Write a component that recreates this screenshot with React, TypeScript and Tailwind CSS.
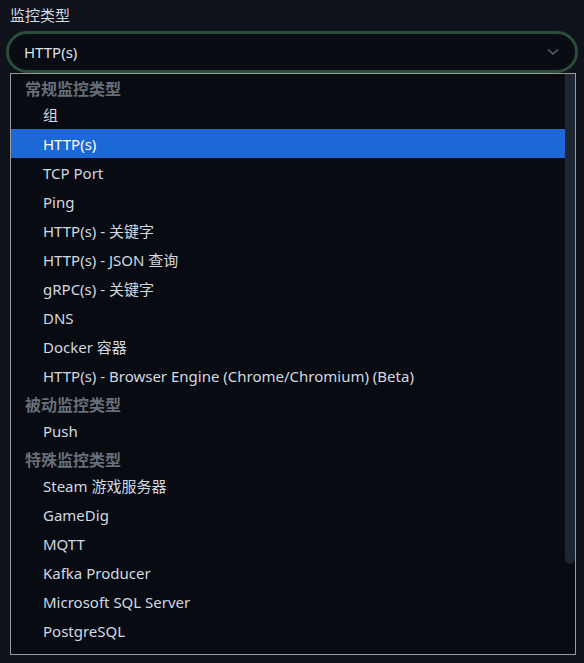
import React from "react";

type Row = { kind: "h" | "i"; text: string; active?: boolean };

const rows: Row[] = [
  { kind: "h", text: "常规监控类型" },
  { kind: "i", text: "组" },
  { kind: "i", text: "HTTP(s)", active: true },
  { kind: "i", text: "TCP Port" },
  { kind: "i", text: "Ping" },
  { kind: "i", text: "HTTP(s) - 关键字" },
  { kind: "i", text: "HTTP(s) - JSON 查询" },
  { kind: "i", text: "gRPC(s) - 关键字" },
  { kind: "i", text: "DNS" },
  { kind: "i", text: "Docker 容器" },
  { kind: "i", text: "HTTP(s) - Browser Engine (Chrome/Chromium) (Beta)" },
  { kind: "h", text: "被动监控类型" },
  { kind: "i", text: "Push" },
  { kind: "h", text: "特殊监控类型" },
  { kind: "i", text: "Steam 游戏服务器" },
  { kind: "i", text: "GameDig" },
  { kind: "i", text: "MQTT" },
  { kind: "i", text: "Kafka Producer" },
  { kind: "i", text: "Microsoft SQL Server" },
  { kind: "i", text: "PostgreSQL" },
];

export default function App() {
  return (
    <div
      className="w-[584px] h-[663px] bg-[#0f121a] overflow-hidden relative"
      style={{ fontFamily: '"Noto Sans", "Noto Sans CJK SC", sans-serif' }}
    >
      <div className="pt-[4px] pl-[10px] text-[15px] leading-[22px] text-[#d5dae1]">监控类型</div>
      <div className="mt-[5px] mx-[6px] h-[42px] rounded-full border-[3px] border-[#2d4d3c] bg-[#090c13] flex items-center justify-between pl-[15px] pr-[16px]">
        <span className="text-[15px] text-[#dde2e8]">HTTP(s)</span>
        <svg width="12" height="8" viewBox="0 0 12 8" fill="none">
          <path d="M1 1.5 L6 6 L11 1.5" stroke="#5b6270" strokeWidth="1.6" />
        </svg>
      </div>
      <div className="absolute left-[10px] top-[73px] w-[566px] h-[582px] border border-[#9a9a9a] bg-[#080b12] flex">
        <div className="flex-1 flex flex-col">
          {rows.map((r, i) =>
            r.kind === "h" ? (
              <div
                key={i}
                className="h-[26px] flex items-center pt-[3px] pl-[14px] text-[16px] font-semibold text-[#676e79]"
              >
                {r.text}
              </div>
            ) : (
              <div
                key={i}
                className={`h-[29px] flex items-center pt-[2px] pl-[32px] text-[15px] ${
                  r.active ? "bg-[#1b68d6] text-white" : "text-[#d3d9e0]"
                }`}
              >
                {r.text}
              </div>
            )
          )}
        </div>
        <div className="w-[10px] h-[490px] bg-[#1e2634] rounded-b-[5px]" />
      </div>
    </div>
  );
}
